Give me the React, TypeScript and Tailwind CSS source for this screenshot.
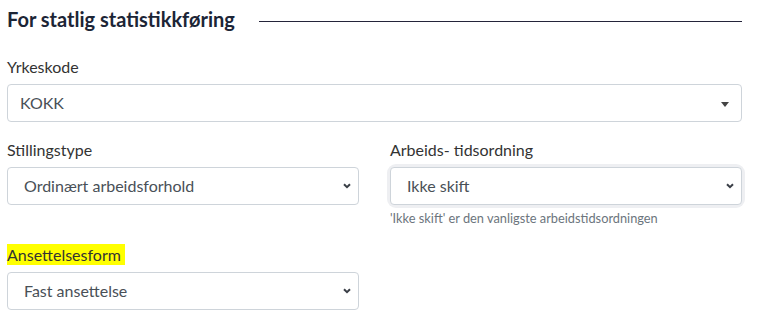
const selectBase =
  "w-full h-[38px] appearance-none rounded-[4px] border border-[#ced4da] bg-white text-[16px] leading-[24px] text-[#495057] outline-none";

function Chevron() {
  return (
    <svg
      className="pointer-events-none absolute right-[8px] top-1/2 -translate-y-1/2"
      width="8"
      height="6"
      viewBox="0 0 8 6"
      fill="none"
    >
      <path d="M1 1.2l3 3 3-3" stroke="#3a3f47" strokeWidth="2" />
    </svg>
  );
}

function Field({
  label,
  value,
  focused,
  help,
  highlight,
}: {
  label: string;
  value: string;
  focused?: boolean;
  help?: string;
  highlight?: boolean;
}) {
  return (
    <div className="flex flex-col">
      <label className="mb-[8px] text-[16px] leading-[19px] text-[#333333]">
        {highlight ? <span className="bg-[#ffff00] py-px pr-[4px]">{label}</span> : label}
      </label>
      <div
        className={
          "relative rounded-[6px] " + (focused ? "shadow-[0_0_0_3px_#eeeff2]" : "")
        }
      >
        <select className={selectBase + " pl-[16px] pr-[28px]"} defaultValue={value}>
          <option>{value}</option>
        </select>
        <Chevron />
      </div>
      {help && (
        <p className="mt-[5px] text-[12.8px] leading-[17px] text-[#6c757d]">{help}</p>
      )}
    </div>
  );
}

export default function App() {
  return (
    <div
      className="w-[758px] h-[330px] bg-white pl-[7px] pr-[16px] pt-[7px]"
      style={{ fontFamily: "Lato, 'Open Sans', sans-serif" }}
    >
      {/* Overskrift med linje */}
      <div className="flex items-center">
        <h2 className="text-[20px] leading-[24px] font-bold text-[#1c2536] whitespace-nowrap">
          For statlig statistikkføring
        </h2>
        <div className="ml-[24px] mt-[4px] h-px flex-1 bg-[#24243a]" />
      </div>

      {/* Yrkeskode */}
      <div className="mt-[26px] flex flex-col">
        <label className="mb-[8px] text-[16px] leading-[19px] text-[#333333]">Yrkeskode</label>
        <div className="relative flex h-[38px] items-center rounded-[4px] border border-[#ced4da] bg-white pl-[12px] text-[16px] text-[#495057]">
          KOKK
          <span className="absolute right-[12px] top-[17px] h-0 w-0 border-x-[4.5px] border-t-[5px] border-x-transparent border-t-[#444444]" />
        </div>
      </div>

      {/* Stillingstype / arbeidstid */}
      <div className="mt-[18px] grid grid-cols-2 gap-x-[31px]">
        <Field label="Stillingstype" value="Ordinært arbeidsforhold" />
        <Field
          label="Arbeids- tidsordning"
          value="Ikke skift"
          focused
          help="'Ikke skift' er den vanligste arbeidstidsordningen"
        />
      </div>

      {/* Ansettelsesform */}
      <div className="mt-[18px] grid grid-cols-2 gap-x-[31px]">
        <Field label="Ansettelsesform" value="Fast ansettelse" highlight />
      </div>
    </div>
  );
}
